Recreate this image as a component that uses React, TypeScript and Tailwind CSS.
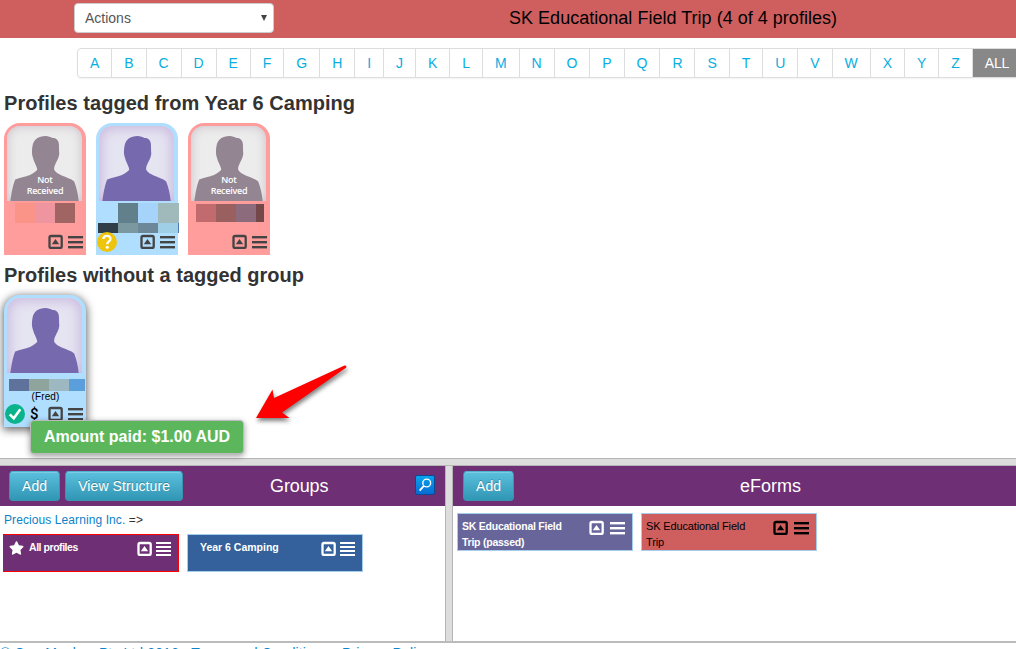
import React from 'react';
import clsx from 'clsx';
import { FaStar } from 'react-icons/fa';

const LETTERS = 'ABCDEFGHIJKLMNOPQRSTUVWXYZ'.split('');

interface Swatch {
  w: number;
  h: number;
  color: string;
}

interface ProfileCardProps {
  received?: boolean;
  rows: Swatch[][];
  swatchClass: string;
  nickname?: string;
  status?: 'unknown' | 'ok';
  className?: string;
  children?: React.ReactNode;
}

function CaretBox() {
  return (
    <svg className="h-[15px] w-[15px] shrink-0" viewBox="0 0 15 15">
      <rect x="1.5" y="2" width="12.2" height="12" rx="1.6" fill="none" stroke="currentColor" strokeWidth="2.3" />
      <path d="M7.5 5 L11.2 10.2 H3.8 Z" fill="currentColor" />
    </svg>
  );
}

function Bars({ count = 3 }: { count?: 3 | 4 }) {
  return (
    <svg className="h-[15px] w-[15px] shrink-0" viewBox="0 0 15 15">
      {(count === 3 ? [2, 7, 12] : [1, 5, 9, 13]).map((y) => (
        <rect key={y} x="0" y={y} width="15" height={count === 3 ? 2.4 : 2} fill="currentColor" />
      ))}
    </svg>
  );
}

function Portrait({ received }: { received: boolean }) {
  return (
    <div
      className={clsx(
        'relative h-[75px] w-[75px] overflow-hidden rounded-t-[13px]',
        received
          ? 'bg-[#e5e4f1] shadow-[inset_0_0_12px_3px_#cbbbe0]'
          : 'bg-[#ececec] shadow-[inset_0_0_10px_1px_#cfc5cd]'
      )}
    >
      <svg className="block h-[75px] w-[75px]" viewBox="0 0 75 75">
        <path
          d="M3.3 75 C4.5 67 6 58 8.2 53.5 C13 51.5 18 51 23 49 C27 47 29.5 45 30.3 43.5 C29.5 39.5 27 36 26 32 C24.5 28 24.8 24 25.5 20 C26.5 13.5 31.5 10 38.5 10 C41.5 10 43.5 11 45.5 12 C49 12 51.5 14 51.8 17.5 C52.3 21 51.8 25 52.3 27.5 C52 32 49.5 35 48.2 38.5 C47 41 47 43 47.3 44 C49 46.5 51.5 48 54.7 49.5 C59 51.5 64 52.5 67.2 55.5 C69.5 61 71 68 71.7 75 Z"
          fill={received ? '#7669ad' : '#938592'}
        />
      </svg>
      {!received && (
        <div className="absolute inset-x-0 top-[48px] pl-px text-center font-['Open_Sans','Noto_Sans',sans-serif] text-[9px] leading-[11px] font-semibold tracking-[-0.25px] text-white">
          <div>Not</div>
          <div>Received</div>
        </div>
      )}
    </div>
  );
}

function ProfileCard({ received = false, rows, swatchClass, nickname, status, className, children }: ProfileCardProps) {
  return (
    <div
      className={clsx(
        'relative flex h-[132px] w-[82px] flex-col rounded-t-[16px] pt-[3px] text-[#444]',
        received ? 'bg-[#b0deff]' : 'bg-[#ff9c9c]',
        className
      )}
    >
      <div className="shrink-0 pl-[3px]">
        <Portrait received={received} />
      </div>
      <div className={swatchClass}>
        {rows.map((row, i) => (
          <div key={i} className="flex">
            {row.map((s, j) => (
              <span key={j} className="shrink-0" style={{ width: s.w, height: s.h, background: s.color }} />
            ))}
          </div>
        ))}
      </div>
      {nickname && (
        <div className="-mb-[3px] shrink-0 pl-px text-center text-[10px] leading-[12px] tracking-[0.1px] text-black">
          ({nickname})
        </div>
      )}
      <div className="mt-auto flex h-[27px] shrink-0 items-center justify-end gap-[5px] pr-[3px]">
        {status === 'unknown' && (
          <svg className="mr-auto ml-[1px] h-5 w-5" viewBox="0 0 20 20">
            <circle cx="10" cy="10" r="10" fill="#eec40c" />
            <path d="M6.3 7 C6.5 2.7 13.7 2.8 13.5 7 C13.4 9.5 10.2 9.4 10.2 12.3" fill="none" stroke="#fff" strokeWidth="2.3" />
            <circle cx="10.2" cy="15.3" r="1.5" fill="#fff" />
          </svg>
        )}
        {status === 'ok' && (
          <>
            <svg className="ml-[1px] h-5 w-5" viewBox="0 0 20 20">
              <circle cx="10" cy="10" r="10" fill="#0bb38c" />
              <path d="M4.8 10.3 L8.8 14.3 L15.3 5.3" fill="none" stroke="#fff" strokeWidth="2.6" />
            </svg>
            <span className="mr-auto font-[Roboto,sans-serif] text-[15px] leading-5 font-medium text-black">$</span>
          </>
        )}
        <CaretBox />
        <Bars />
      </div>
      {children}
    </div>
  );
}

function BlueButton({ children }: { children: React.ReactNode }) {
  return (
    <button
      type="button"
      className="h-[30px] rounded-[4px] border border-[#3a94b0] border-t-[#4fb3d0] bg-linear-to-b from-[#5bc0de] to-[#2f96b4] px-3 text-[14px] leading-5 tracking-[0.08px] text-white shadow-[inset_0_1px_0_rgba(255,255,255,0.2)] [text-shadow:0_-1px_0_rgba(0,0,0,0.25)]"
    >
      {children}
    </button>
  );
}

interface TileProps {
  label: string;
  className: string;
  labelClass: string;
  compact?: boolean;
  star?: boolean;
}

function Tile({ label, className, labelClass, compact, star }: TileProps) {
  return (
    <div className={clsx('flex h-[38px] w-[176px] border', className)}>
      {star && <FaStar className="mt-[6px] ml-[5px] h-[14px] w-[15px] shrink-0" />}
      <div className={clsx('pt-[4px] leading-4', labelClass)}>{label}</div>
      <div className={clsx('mt-[6px] mr-[7px] ml-auto flex', compact ? 'gap-1' : 'gap-[6px]')}>
        <CaretBox />
        <Bars count={compact ? 4 : 3} />
      </div>
    </div>
  );
}

export default function App() {
  return (
    <div className="flex h-[649px] w-[1016px] flex-col overflow-hidden bg-white font-['Liberation_Sans',Arial,sans-serif] text-[#333]">
      <header className="flex h-[38px] shrink-0 bg-[#cf5f5f]">
        <div className="mt-[3px] ml-[74px] flex h-[30px] w-[200px] items-center justify-between rounded-[4px] border border-[#ccc] bg-white pr-[6px] pl-[10px] text-[14px] text-[#555]">
          <span>Actions</span>
          <svg className="h-[6px] w-[6px]" viewBox="0 0 6 6">
            <path d="M0 0 H6 L3 6 Z" fill="#444" />
          </svg>
        </div>
        <h1 className="ml-[235px] text-[18px] leading-[36px] tracking-[0.02px] whitespace-nowrap text-black">
          SK Educational Field Trip (4 of 4 profiles)
        </h1>
      </header>

      <main className="h-[420px] shrink-0">
        <nav className="mt-[10px] ml-[77px] flex h-[30px] w-max rounded-[4px] border border-[#ddd] text-[14px] leading-7 tracking-[-0.08px] text-[#08aee0] shadow-[0_1px_2px_rgba(0,0,0,0.05)]">
          {LETTERS.map((l) => (
            <a key={l} className="border-r border-[#ddd] px-3">
              {l}
            </a>
          ))}
          <a className="bg-[#888] px-3 text-white">ALL</a>
        </nav>

        <h2 className="mt-[5px] ml-1 text-[20px] leading-10 font-bold tracking-[0.04px]">
          Profiles tagged from Year 6 Camping
        </h2>
        <div className="ml-1 flex gap-[10px]">
          <ProfileCard
            swatchClass="mt-[2px] ml-[11px]"
            rows={[
              [
                { w: 20, h: 20, color: '#fa9489' },
                { w: 20, h: 20, color: '#ee95a0' },
                { w: 20, h: 20, color: '#a06462' },
              ],
            ]}
          />
          <ProfileCard
            received
            status="unknown"
            swatchClass="mt-[2px] ml-[2px] min-h-0"
            rows={[
              [
                { w: 20, h: 20, color: '#b0deff' },
                { w: 20, h: 20, color: '#62808c' },
                { w: 20, h: 20, color: '#a5d3f9' },
                { w: 21, h: 20, color: '#a0babb' },
              ],
              [
                { w: 20, h: 10, color: '#303e48' },
                { w: 20, h: 10, color: '#7b97a0' },
                { w: 20, h: 10, color: '#6c8797' },
                { w: 20, h: 10, color: '#9fcfe7' },
                { w: 1, h: 10, color: '#4e79b0' },
              ],
            ]}
          />
          <ProfileCard
            swatchClass="mt-[3px] ml-[8px]"
            rows={[
              [
                { w: 20, h: 18, color: '#c16b6f' },
                { w: 20, h: 18, color: '#9a605f' },
                { w: 20, h: 18, color: '#8c6b7c' },
                { w: 8, h: 18, color: '#74484b' },
              ],
            ]}
          />
        </div>

        <h2 className="ml-1 text-[20px] leading-10 font-bold">Profiles without a tagged group</h2>
        <ProfileCard
          received
          status="ok"
          nickname="Fred"
          className="ml-1 shadow-[0_2px_8px_1px_rgba(0,0,0,0.6)]"
          swatchClass="mt-[6px] ml-[5px] shrink-0"
          rows={[
            [
              { w: 20, h: 12, color: '#5f729b' },
              { w: 20, h: 12, color: '#8ea49c' },
              { w: 20, h: 12, color: '#9db8c0' },
              { w: 16, h: 12, color: '#5a9fdb' },
            ],
          ]}
        >
          <div className="absolute top-[125px] left-[26px] z-10 h-[34px] w-[214px] rounded-[4px] border border-[#bbb] bg-[#5cb75c] text-center text-[16px] leading-[32px] font-bold whitespace-nowrap text-white shadow-[0_2px_6px_rgba(0,0,0,0.4)]">
            Amount paid: $1.00 AUD
          </div>
          {/* callout arrow pointing at the amount bubble */}
          <svg
            className="absolute top-[65px] left-[246px] h-[64px] w-[104px] drop-shadow-[1px_3px_2px_rgba(0,0,0,0.5)]"
            viewBox="250 360 104 64"
          >
            <path d="M256 418 L272.5 389.5 L274 398 L344.5 365.5 Q347 365.3 346.3 367.5 L282 412.5 L289.5 418 Z" fill="#fe0000" />
          </svg>
        </ProfileCard>
      </main>

      <div className="h-[8px] shrink-0 border-y border-[#b5b5b5] bg-[#ddd]" />

      <div className="flex h-[177px] shrink-0 border-b-2 border-[#bbb]">
        <section className="w-[445px]">
          <div className="flex h-10 items-center bg-[#6e2f74] pr-[10px] pl-[9px]">
            <div className="flex w-[261px] gap-[5px]">
              <BlueButton>Add</BlueButton>
              <BlueButton>View Structure</BlueButton>
            </div>
            <h3 className="flex-1 text-[18px] tracking-[-0.1px] text-white">Groups</h3>
            <svg className="mb-[2px] h-5 w-5" viewBox="0 0 20 20">
              <defs>
                <linearGradient id="search" x1="0" y1="0" x2="0" y2="1">
                  <stop offset="0" stopColor="#08a5ee" />
                  <stop offset="1" stopColor="#0869d2" />
                </linearGradient>
              </defs>
              <rect x="0.5" y="0.5" width="19" height="19" rx="1.5" fill="url(#search)" stroke="#0a4a94" />
              <circle cx="11.7" cy="8" r="3.9" fill="none" stroke="#fff" strokeWidth="1.4" />
              <path d="M8.9 10.9 L4.6 15.6" stroke="#fff" strokeWidth="1.8" />
            </svg>
          </div>
          <div className="h-[28px] pl-1 text-[12px] leading-[28px] tracking-[0.09px]">
            <a className="text-[#0c82c8]">Precious Learning Inc.</a> =&gt;
          </div>
          <div className="ml-[3px] flex gap-2 text-white">
            <Tile
              star
              compact
              label="All profiles"
              className="border-[#f00] bg-[#6e2f74]"
              labelClass="pl-[5px] text-[10.5px] font-bold tracking-[-0.45px]"
            />
            <Tile
              compact
              label="Year 6 Camping"
              className="border-[#a5cdec] bg-[#34619b]"
              labelClass="pl-[12px] text-[10.5px] font-bold"
            />
          </div>
        </section>
        <div className="w-[8px] border-x border-[#b5b5b5] bg-[#ddd]" />
        <section className="flex-1">
          <div className="flex h-10 items-center bg-[#6e2f74] pl-[10px]">
            <div className="w-[277px]">
              <BlueButton>Add</BlueButton>
            </div>
            <h3 className="text-[18px] text-white">eForms</h3>
          </div>
          <div className="mt-[7px] ml-1 flex gap-2">
            <Tile
              label="SK Educational Field Trip (passed)"
              className="border-[#a5cdec] bg-[#67659a] text-white"
              labelClass="w-[114px] pl-[4px] text-[10.5px] font-bold tracking-[-0.24px]"
            />
            <Tile
              label="SK Educational Field Trip"
              className="border-[#a5cdec] bg-[#cf5f5f] text-black"
              labelClass="w-[114px] pl-[4px] text-[11px] tracking-[-0.15px]"
            />
          </div>
        </section>
      </div>

      <footer className="shrink-0 text-[14px] leading-5 tracking-[0.11px] whitespace-nowrap text-[#0c82c8]">
        © CareMonkey Pty Ltd 2016 - Terms and Conditions • Privacy Policy
      </footer>
    </div>
  );
}
